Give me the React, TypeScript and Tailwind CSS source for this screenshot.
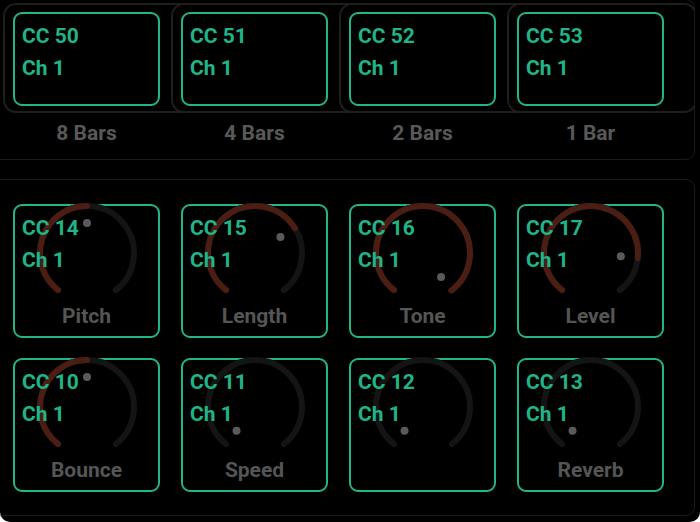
import React from "react";

const FONT = { fontFamily: "Roboto, 'Liberation Sans', sans-serif" };

const START = -142;
const END = 142;

function polar(cx: number, cy: number, r: number, a: number) {
  const rad = (a * Math.PI) / 180;
  return [cx + r * Math.sin(rad), cy - r * Math.cos(rad)];
}

function arcPath(cx: number, cy: number, r: number, a0: number, a1: number) {
  const [x0, y0] = polar(cx, cy, r, a0);
  const [x1, y1] = polar(cx, cy, r, a1);
  const large = a1 - a0 > 180 ? 1 : 0;
  return `M ${x0.toFixed(2)} ${y0.toFixed(2)} A ${r} ${r} 0 ${large} 1 ${x1.toFixed(2)} ${y1.toFixed(2)}`;
}

function Knob({ angle }: { angle: number }) {
  const cx = 60;
  const cy = 60;
  const r = 47;
  const [dx, dy] = polar(cx, cy, 30, angle);
  return (
    <svg
      width={120}
      height={120}
      viewBox="0 0 120 120"
      className="absolute left-[12px] top-[-13px]"
    >
      <path d={arcPath(cx, cy, r, START, END)} stroke="#141414" strokeWidth={6} fill="none" strokeLinecap="round" />
      {angle > START + 1 && (
        <path d={arcPath(cx, cy, r, START, angle)} stroke="#4b1d13" strokeWidth={6} fill="none" strokeLinecap="round" />
      )}
      <circle cx={dx} cy={dy} r={4} fill="#5a5a5a" />
    </svg>
  );
}

function CCText({ cc }: { cc: number }) {
  return (
    <div className="relative pl-[7px] text-[21px] font-bold leading-[32px] text-[#1fb589]">
      <div>CC {cc}</div>
      <div>Ch 1</div>
    </div>
  );
}

const pads = [
  { cc: 50, label: "8 Bars" },
  { cc: 51, label: "4 Bars" },
  { cc: 52, label: "2 Bars" },
  { cc: 53, label: "1 Bar" },
];

const knobs = [
  { cc: 14, label: "Pitch", angle: 0 },
  { cc: 15, label: "Length", angle: 58 },
  { cc: 16, label: "Tone", angle: 143 },
  { cc: 17, label: "Level", angle: 96 },
  { cc: 10, label: "Bounce", angle: 0 },
  { cc: 11, label: "Speed", angle: START },
  { cc: 12, label: "", angle: START },
  { cc: 13, label: "Reverb", angle: START },
];

export default function App() {
  return (
    <div className="w-[700px] h-[522px] bg-white" style={FONT}>
      <div className="w-[700px] h-[522px] bg-black rounded-b-[10px] overflow-hidden">
        {/* top panel */}
        <div className="ml-[-10px] mt-[-1px] w-[705px] h-[161px] border border-[#1b1b1b] rounded-[9px] overflow-hidden">
          <div className="flex pl-[12px]">
            {pads.map((p) => (
              <div key={p.cc} className="w-[168px] shrink-0">
                <div className="relative mt-[3px] w-[190px] h-[110px] rounded-[13px] border-2 border-[#1e1e1e] bg-black">
                  <div className="ml-[8px] mt-[7px] w-[147px] h-[94px] rounded-[9px] border-2 border-[#22b58b] pt-[6px]">
                    <CCText cc={p.cc} />
                  </div>
                </div>
                <div className="ml-[10px] mt-[6px] w-[147px] text-center text-[21px] font-bold leading-[28px] text-[#585858]">
                  {p.label}
                </div>
              </div>
            ))}
          </div>
        </div>

        {/* knob panel */}
        <div className="ml-[-10px] mt-[19px] w-[705px] h-[337px] border border-[#1b1b1b] rounded-[9px] overflow-hidden pl-[22px] pt-[24px]">
          <div className="grid grid-cols-[147px_147px_147px_147px] gap-x-[21px] gap-y-[20px]">
            {knobs.map((k) => (
              <div
                key={k.cc}
                className="relative h-[134px] rounded-[9px] border-2 border-[#22b58b] pt-[6px]"
              >
                <Knob angle={k.angle} />
                <CCText cc={k.cc} />
                {k.label && (
                  <div className="absolute left-0 right-0 bottom-[6px] text-center text-[21px] font-bold leading-[28px] text-[#555555]">
                    {k.label}
                  </div>
                )}
              </div>
            ))}
          </div>
        </div>
      </div>
    </div>
  );
}
